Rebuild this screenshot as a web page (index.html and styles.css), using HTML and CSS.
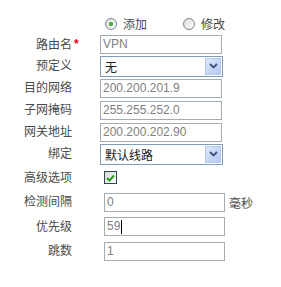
FILE: index.html
```html
<!DOCTYPE html>
<html lang="zh-CN">
<head>
  <meta charset="UTF-8" />
  <title>路由设置</title>
  <link rel="stylesheet" href="styles.css">
</head>
<body>
  <form class="route-form">
    <div class="row row-radio">
      <span class="label"></span>
      <div class="ctrl">
        <span class="radio checked"></span><span class="radio-text">添加</span>
        <span class="radio"></span><span class="radio-text">修改</span>
      </div>
    </div>

    <div class="row h21">
      <span class="label">路由名<i class="req">*</i></span>
      <div class="ctrl"><div class="field">VPN</div></div>
    </div>

    <div class="row h22">
      <span class="label">预定义</span>
      <div class="ctrl">
        <div class="select"><span class="sel-text">无</span><span class="sel-btn"><svg width="9" height="6" viewBox="0 0 9 6"><polyline points="1,1 4.5,4.5 8,1" fill="none" stroke="#3f5378" stroke-width="1.8"/></svg></span></div>
      </div>
    </div>

    <div class="row h22">
      <span class="label">目的网络</span>
      <div class="ctrl"><div class="field">200.200.201.9</div></div>
    </div>

    <div class="row h22">
      <span class="label">子网掩码</span>
      <div class="ctrl"><div class="field">255.255.252.0</div></div>
    </div>

    <div class="row h22">
      <span class="label">网关地址</span>
      <div class="ctrl"><div class="field">200.200.202.90</div></div>
    </div>

    <div class="row h22">
      <span class="label">绑定</span>
      <div class="ctrl">
        <div class="select"><span class="sel-text">默认线路</span><span class="sel-btn"><svg width="9" height="6" viewBox="0 0 9 6"><polyline points="1,1 4.5,4.5 8,1" fill="none" stroke="#3f5378" stroke-width="1.8"/></svg></span></div>
      </div>
    </div>

    <div class="row h25">
      <span class="label">高级选项</span>
      <div class="ctrl">
        <span class="check"><svg width="9" height="8" viewBox="0 0 9 8"><polyline points="1,4 3.5,6.5 8,1.5" fill="none" stroke="#22a022" stroke-width="2"/></svg></span>
      </div>
    </div>

    <div class="row h24">
      <span class="label">检测间隔</span>
      <div class="ctrl"><div class="field short">0</div><span class="unit">毫秒</span></div>
    </div>

    <div class="row h25">
      <span class="label">优先级</span>
      <div class="ctrl"><div class="field short">59<span class="caret"></span></div></div>
    </div>

    <div class="row h24">
      <span class="label">跳数</span>
      <div class="ctrl"><div class="field short">1</div></div>
    </div>
  </form>
</body>
</html>
```

FILE: styles.css
```css
* {
  box-sizing: border-box;
}

html, body {
  margin: 0;
  padding: 0;
  background: #fff;
  font-family: 'Liberation Sans', 'Noto Sans CJK SC', sans-serif;
  font-size: 12px;
  color: #333;
}

.route-form {
  padding-top: 13px;
  width: 281px;
}

.row {
  display: flex;
  align-items: center;
}

.row-radio { height: 21px; }
.h21 { height: 21px; }
.h22 { height: 22px; }
.h24 { height: 24px; }
.h25 { height: 25px; }

.label {
  position: relative;
  width: 72px;
  text-align: right;
  line-height: 14px;
  color: #4a4a4a;
}

.req {
  position: absolute;
  left: 100%;
  top: -1px;
  margin-left: 2px;
  font-style: normal;
  color: #e0001b;
  font-weight: bold;
}

.ctrl {
  margin-left: 28px;
  display: flex;
  align-items: center;
}

/* radios */
.radio {
  width: 12px;
  height: 12px;
  margin-left: 5px;
  border: 1px solid #7a8591;
  border-radius: 50%;
  background: linear-gradient(135deg, #dcdcd6, #fff);
  display: flex;
  align-items: center;
  justify-content: center;
}

.radio.checked::after {
  content: "";
  width: 4px;
  height: 4px;
  border-radius: 50%;
  background: #3fae3f;
  box-shadow: 0 0 1px #6cc46c;
}

.radio-text {
  margin-left: 6px;
  width: 55px;
  color: #4a4a4a;
}

/* text fields */
.field {
  width: 122px;
  height: 19px;
  border: 1px solid #a5acb2;
  padding-left: 2px;
  line-height: 17px;
  color: #808080;
  display: flex;
  align-items: center;
}

.field.short {
  width: 121px;
  margin-left: 4px;
}

.caret {
  width: 1px;
  height: 14px;
  background: #000;
  margin-left: 1px;
}

.unit {
  margin-left: 4px;
  color: #4a4a4a;
}

/* selects */
.select {
  width: 123px;
  height: 21px;
  border: 1px solid #7f9db9;
  display: flex;
  align-items: center;
  justify-content: space-between;
  padding: 1px;
}

.sel-text {
  padding-left: 3px;
  color: #222;
}

.sel-btn {
  width: 16px;
  height: 17px;
  border: 1px solid #b9c9ea;
  background: linear-gradient(135deg, #dde7fb, #b4c8f2);
  display: flex;
  align-items: center;
  justify-content: center;
}

/* checkbox */
.check {
  width: 13px;
  height: 13px;
  margin-left: 4px;
  border: 1px solid #2f4a4a;
  background: linear-gradient(135deg, #dcdcd7, #fafafa);
  display: flex;
  align-items: center;
  justify-content: center;
}
```
